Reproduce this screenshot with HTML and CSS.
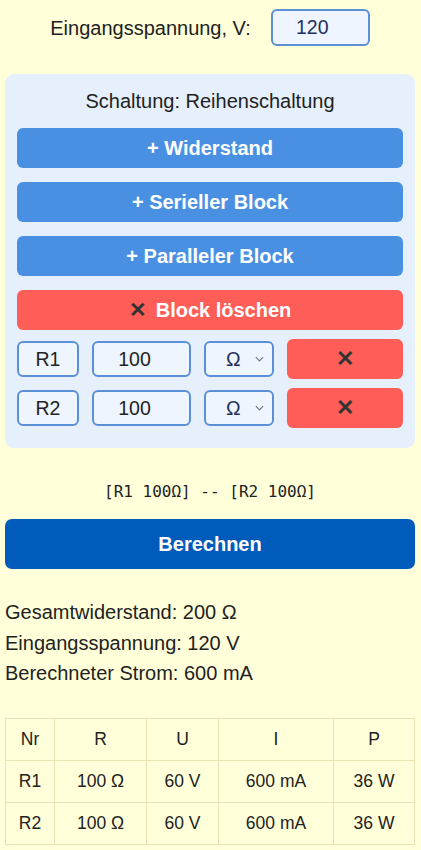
FILE: index.html
```html
<!DOCTYPE html>
<html lang="de">
<head>
<meta charset="utf-8">
<link rel="stylesheet" href="styles.css">
</head>
<body>
<div class="page">
  <div class="voltage">
    <label class="voltage-label">Eingangsspannung, V:</label>
    <input class="field voltage-input" type="text" value="120">
  </div>

  <div class="panel">
    <div class="panel-title">Schaltung: Reihenschaltung</div>
    <button class="btn btn-blue">+ Widerstand</button>
    <button class="btn btn-blue">+ Serieller Block</button>
    <button class="btn btn-blue">+ Paralleler Block</button>
    <button class="btn btn-red"><span class="x">✕</span> Block löschen</button>

    <div class="row">
      <div class="field name">R1</div>
      <input class="field value" type="text" value="100">
      <div class="field unit"><span>Ω</span><svg class="chev" viewBox="0 0 10 6" width="9" height="6"><path d="M1 1 L5 5 L9 1" fill="none" stroke="#777" stroke-width="1.3"/></svg></div>
      <button class="del"><span class="x">✕</span></button>
    </div>
    <div class="row">
      <div class="field name">R2</div>
      <input class="field value" type="text" value="100">
      <div class="field unit"><span>Ω</span><svg class="chev" viewBox="0 0 10 6" width="9" height="6"><path d="M1 1 L5 5 L9 1" fill="none" stroke="#777" stroke-width="1.3"/></svg></div>
      <button class="del"><span class="x">✕</span></button>
    </div>
  </div>

  <div class="diagram">[R1 100Ω] -- [R2 100Ω]</div>

  <button class="calc">Berechnen</button>

  <div class="results">
    <div>Gesamtwiderstand: 200 Ω</div>
    <div>Eingangsspannung: 120 V</div>
    <div>Berechneter Strom: 600 mA</div>
  </div>

  <table class="tbl">
    <colgroup>
      <col class="c1"><col class="c2"><col class="c3"><col class="c4"><col class="c5">
    </colgroup>
    <tr><th>Nr</th><th>R</th><th>U</th><th>I</th><th>P</th></tr>
    <tr><td>R1</td><td>100 Ω</td><td>60 V</td><td>600 mA</td><td>36 W</td></tr>
    <tr><td>R2</td><td>100 Ω</td><td>60 V</td><td>600 mA</td><td>36 W</td></tr>
  </table>
</div>
</body>
</html>
```
FILE: styles.css
```css
html, body {
  margin: 0;
  padding: 0;
  background: #ffffd9;
}
body {
  font-family: "Liberation Sans", Arial, sans-serif;
  color: #222;
  font-size: 20px;
}
.page {
  padding: 0 6px 0 5px;
}
.voltage {
  display: flex;
  justify-content: center;
  align-items: center;
  gap: 20px;
  padding-top: 9px;
  height: 37px;
}
.voltage-label {
  font-size: 20px;
  position: relative;
  top: 1px;
}
.field {
  box-sizing: border-box;
  border: 2px solid #5a90d6;
  border-radius: 6px;
  background: #eef5ff;
  font-family: "Liberation Sans", Arial, sans-serif;
  font-size: 19.5px;
  color: #222;
  text-align: center;
  outline: none;
}
.voltage-input {
  width: 99px;
  height: 37px;
  color: #1e2f5c;
  padding: 0 16px 0 0;
}
.panel {
  margin-top: 28px;
  background: #e6f0fc;
  border-radius: 9px;
  padding: 16px 12px 11px;
}
.panel-title {
  text-align: center;
  font-size: 20px;
  line-height: 23px;
  margin-bottom: 15px;
}
.btn {
  display: flex;
  justify-content: center;
  align-items: center;
  width: 100%;
  height: 40px;
  border: none;
  border-radius: 6px;
  color: #fff;
  font-family: "Liberation Sans", Arial, sans-serif;
  font-weight: bold;
  font-size: 20px;
  margin-bottom: 14px;
  padding: 0;
}
.btn-blue { background: #4a90e2; }
.btn-red { background: #ff5d57; margin-bottom: 9px; }
.x {
  color: #333;
  font-weight: bold;
  margin-right: 9px;
  font-size: 21px;
}
.row {
  display: grid;
  grid-template-columns: 62px 99px 70px 1fr;
  column-gap: 13px;
  align-items: center;
  height: 40px;
  margin-bottom: 9px;
}
.row:first-of-type { margin-top: 0; }
.name {
  height: 36px;
  line-height: 32px;
}
.value {
  height: 36px;
  width: 100%;
  padding: 0 14px 0 0;
}
.unit {
  height: 36px;
  display: flex;
  align-items: center;
  justify-content: space-between;
  padding: 0 8px 0 20px;
  color: #1e2f5c;
}
.chev {
  display: block;
}
.del {
  height: 40px;
  border: none;
  border-radius: 6px;
  background: #ff5d57;
  display: flex;
  align-items: center;
  justify-content: center;
  padding: 0;
}
.del .x {
  margin: 0;
  font-size: 22px;
}
.diagram {
  margin-top: 34px;
  text-align: center;
  font-family: "DejaVu Sans Mono", "Liberation Mono", monospace;
  font-size: 16px;
  color: #222;
  line-height: 20px;
}
.calc {
  display: block;
  width: 100%;
  height: 50px;
  margin-top: 17px;
  border: none;
  border-radius: 7px;
  background: #005bbb;
  color: #fff;
  font-family: "Liberation Sans", Arial, sans-serif;
  font-weight: bold;
  font-size: 20px;
}
.results {
  margin-top: 28px;
  font-size: 20px;
  line-height: 30.5px;
}
.tbl {
  margin-top: 29px;
  width: 100%;
  border-collapse: collapse;
  font-size: 17.5px;
}
.tbl th, .tbl td {
  border: 1px solid #e8e2b4;
  height: 41px;
  text-align: center;
  font-weight: normal;
  padding: 0;
}
.c1 { width: 49px; }
.c2 { width: 92px; }
.c3 { width: 72px; }
.c4 { width: 115px; }
```
